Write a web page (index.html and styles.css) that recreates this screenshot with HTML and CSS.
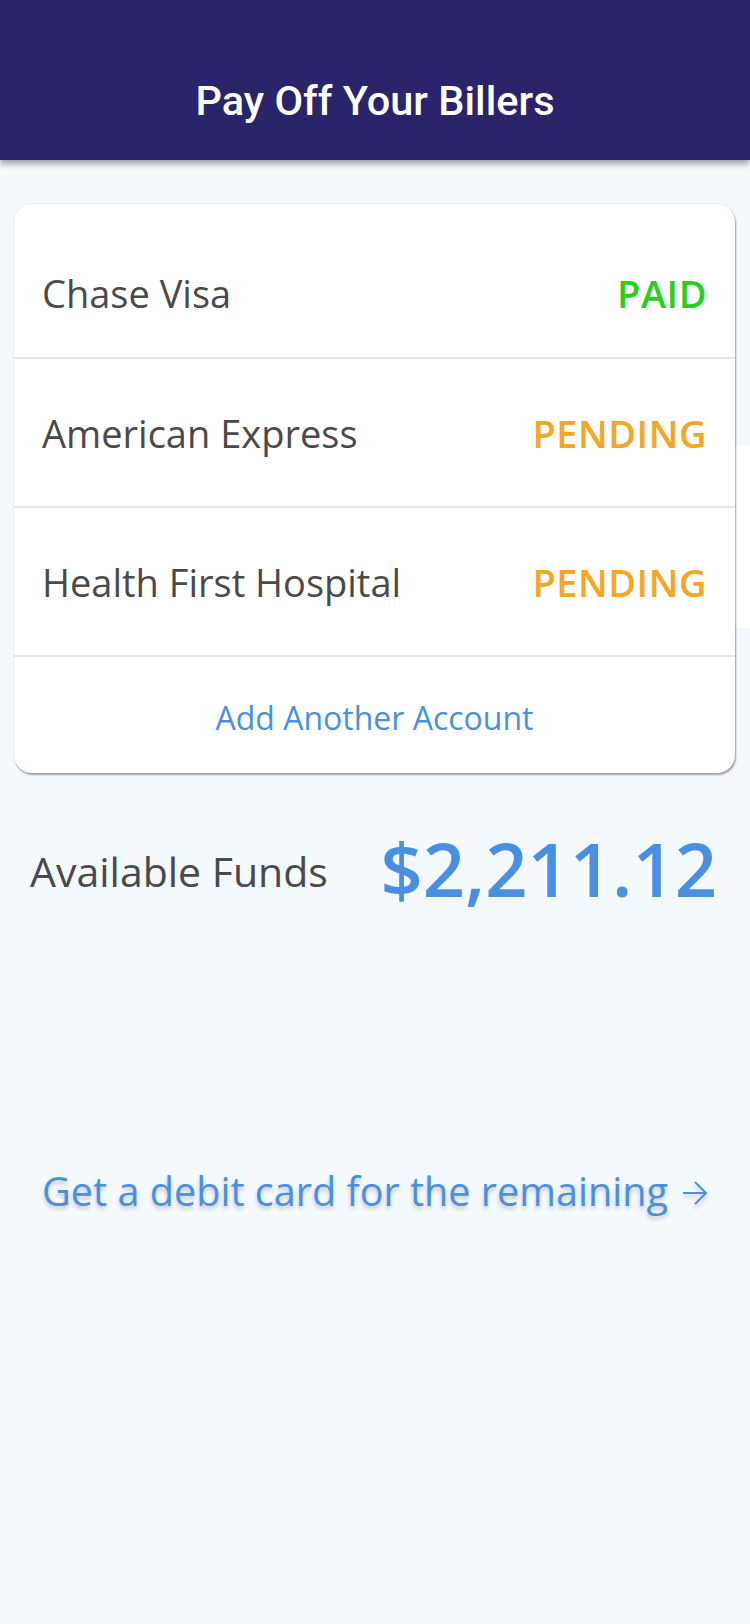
FILE: index.html
```html
<!DOCTYPE html>
<html>
<head>
<meta charset="utf-8">
<link rel="stylesheet" href="styles.css">
</head>
<body>
<header class="topbar">
  <h1 class="title">Pay Off Your Billers</h1>
</header>
<main class="content">
  <div class="card-wrap">
    <div class="strip"></div>
    <section class="card">
      <div class="row row-first">
        <span class="name">Chase Visa</span>
        <span class="status paid">PAID</span>
      </div>
      <div class="row">
        <span class="name">American Express</span>
        <span class="status pending">PENDING</span>
      </div>
      <div class="row">
        <span class="name">Health First Hospital</span>
        <span class="status pending">PENDING</span>
      </div>
      <div class="add-row">
        <span class="add">Add Another Account</span>
      </div>
    </section>
  </div>
  <div class="funds">
    <span class="funds-label">Available Funds</span>
    <span class="funds-amount">$2,211.12</span>
  </div>
  <div class="debit">
    <span class="debit-text">Get a debit card for the remaining</span>
    <svg class="arrow" width="26" height="26" viewBox="0 0 26 26"><path d="M1 13 H24 M13 2 L24 13 L13 24" fill="none" stroke="#4a90e2" stroke-width="2"/></svg>
  </div>
</main>
</body>
</html>
```
FILE: styles.css
```css
* { box-sizing: border-box; }
html, body { margin: 0; padding: 0; }
body {
  width: 750px;
  min-height: 1624px;
  background: #f4f9fe;
  font-family: "Open Sans", "Noto Sans", sans-serif;
}
.topbar {
  height: 160px;
  background: #2a246b;
  display: flex;
  align-items: flex-end;
  justify-content: center;
  padding-bottom: 35px;
  box-shadow: 0 4px 6px rgba(0,0,0,0.35);
  position: relative;
  z-index: 2;
}
.title {
  margin: 0;
  color: #fff;
  font-family: Roboto, "Liberation Sans", sans-serif;
  font-weight: 500;
  font-size: 41.5px;
  line-height: 48px;
}
.content {
  padding-top: 44px;
}
.card-wrap {
  position: relative;
  padding: 0 15px 0 14px;
}
.strip {
  position: absolute;
  right: 0;
  top: 241px;
  width: 20px;
  height: 183px;
  background: #fff;
}
.card {
  position: relative;
  background: #fff;
  border-radius: 18px;
  box-shadow: 1px 2px 2px rgba(0,0,0,0.35), 0 0 0 1px rgba(0,0,0,0.04);
  overflow: hidden;
}
.row {
  height: 149px;
  display: flex;
  align-items: center;
  justify-content: space-between;
  padding: 0 28px;
  border-bottom: 2px solid #e6e6e6;
}
.row-first {
  height: 155px;
  padding-top: 24px;
}
.name {
  font-size: 38px;
  color: #4a4a4a;
}
.status {
  font-size: 38px;
  font-weight: 600;
  letter-spacing: 0.5px;
}
.paid { color: #27d01a; }
.pending { color: #f5a623; }
.add-row {
  height: 116px;
  display: flex;
  align-items: center;
  justify-content: center;
  padding-top: 4px;
}
.add {
  font-size: 32px;
  color: #4a90e2;
}
.funds {
  display: flex;
  align-items: center;
  justify-content: space-between;
  padding: 0 33px 0 30px;
  margin-top: 30px;
  height: 130px;
}
.funds-label {
  font-size: 41px;
  color: #4a4a4a;
  padding-top: 6px;
}
.funds-amount {
  font-size: 74px;
  font-weight: 600;
  color: #4a90e2;
}
.debit {
  margin-top: 231px;
  display: flex;
  align-items: center;
  justify-content: center;
  gap: 14px;
}
.debit-text {
  font-size: 39.6px;
  color: #4a90e2;
  text-shadow: 0 3px 4px rgba(0,0,0,0.2);
}
.arrow { margin-top: 4px; filter: drop-shadow(0 3px 2px rgba(0,0,0,0.2)); }
```
